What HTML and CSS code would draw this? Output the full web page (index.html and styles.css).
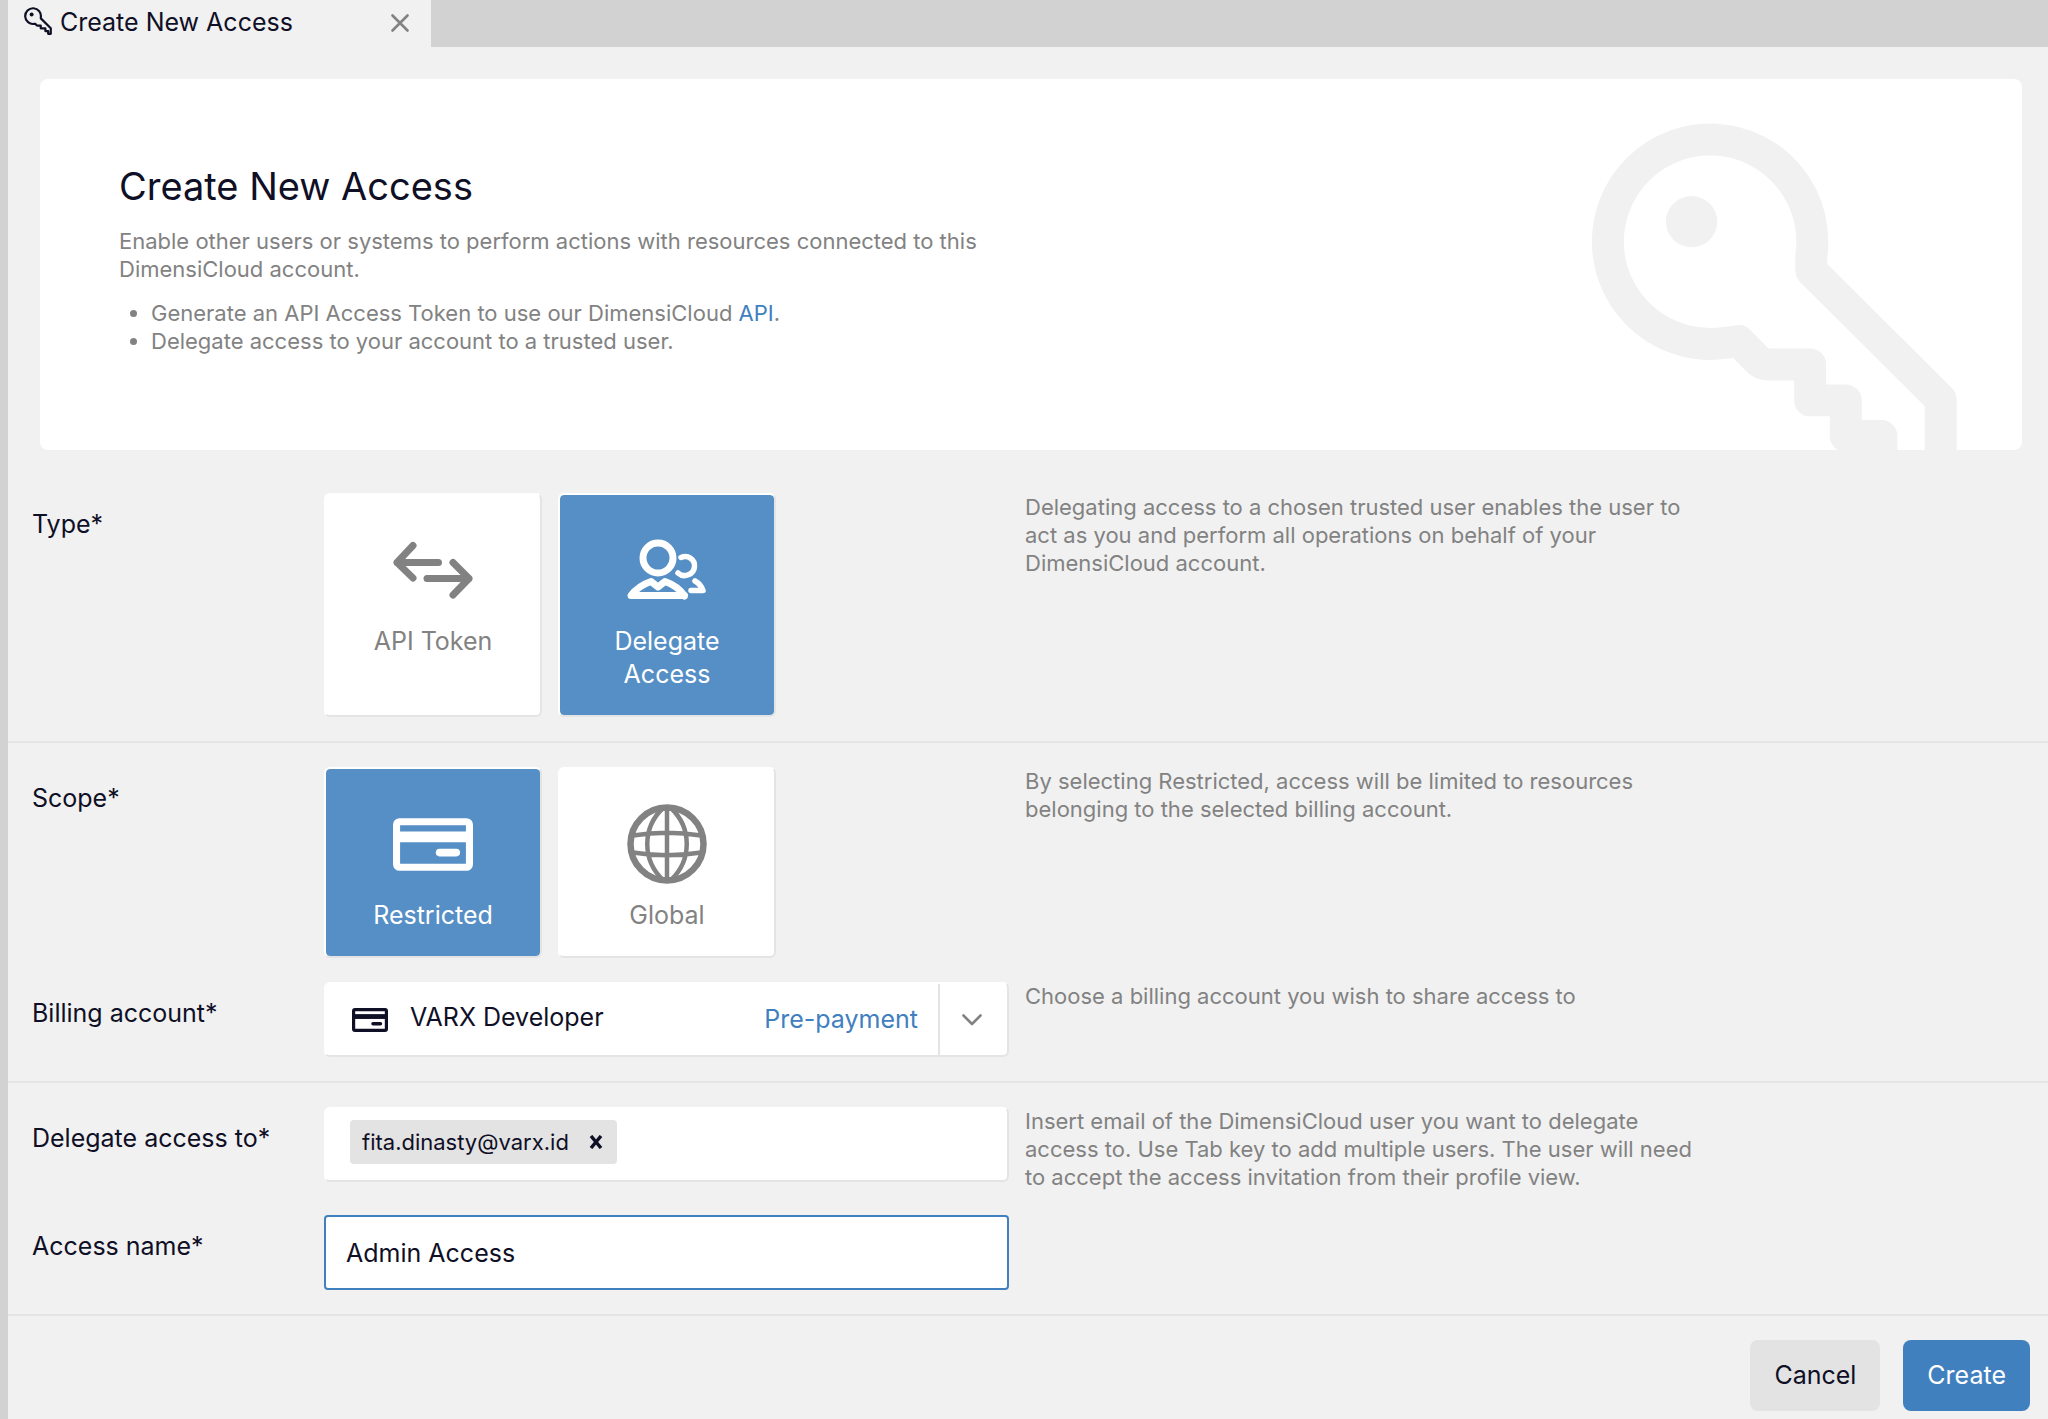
FILE: index.html
```html
<!DOCTYPE html>
<html lang="en">
<head>
<meta charset="utf-8">
<meta name="viewport" content="width=device-width, initial-scale=1">
<title>Create New Access</title>
<link rel="stylesheet" href="styles.css">
</head>
<body>
<svg class="defs" aria-hidden="true">
  <symbol id="card" viewBox="0 0 79 52">
    <rect x="3.5" y="3.5" width="72" height="45" rx="3" fill="none" stroke="currentColor" stroke-width="7"/>
    <path d="M5 18.500H74" stroke="currentColor" stroke-width="10.500"/>
    <path d="M46 34H62.500" stroke="currentColor" stroke-width="7.500" stroke-linecap="round"/>
  </symbol>
</svg>

<div class="app">
  <header class="tabs">
    <div class="tab">
      <svg class="tab-icon" viewBox="96 188 1094 1094" aria-hidden="true">
        <path d="M622 913Q604 913 590 898L536 843L495 848A307 307 0 1 1 753 592L754 632L1142 1018V1236H1040V1128H930V1021H750V913Z" fill="none" stroke="currentColor" stroke-width="86" stroke-linejoin="round"/>
        <circle cx="394" cy="484" r="77" fill="currentColor"/>
      </svg>
      <span class="tab-title">Create New Access</span>
      <button class="tab-close" type="button" aria-label="Close tab">
        <svg viewBox="0 0 18 18" aria-hidden="true"><path d="M1.500 1.500L16.500 16.500M16.500 1.500L1.500 16.500" fill="none" stroke="currentColor" stroke-width="2.600" stroke-linecap="round"/></svg>
      </button>
    </div>
  </header>

  <main>
    <section class="hero">
      <div class="hero-text">
        <h1>Create New Access</h1>
        <p>Enable other users or systems to perform actions with resources connected to this DimensiCloud account.</p>
        <ul>
          <li>Generate an API Access Token to use our DimensiCloud <a href="#api">API</a>.</li>
          <li>Delegate access to your account to a trusted user.</li>
        </ul>
      </div>
      <svg class="hero-key" viewBox="96 188 1094 982" aria-hidden="true">
        <path d="M964 1300V1128H857V1021H750V913H622Q604 913 590 898L536 843L495 848A307 307 0 1 1 753 592L754 632L1142 1018V1300" fill="none" stroke="currentColor" stroke-width="96" stroke-linejoin="round"/>
        <path d="M857 1100V1128H964V1300H905Q857 1176 857 1128Z" fill="currentColor" stroke="none"/>
        <circle cx="394" cy="484" r="77" fill="currentColor"/>
      </svg>
    </section>

    <form>
      <div class="group">
        <div class="row" role="radiogroup" aria-labelledby="type-label">
          <span class="label" id="type-label">Type*</span>
          <div class="tiles">
            <label class="tile">
              <input type="radio" name="type" value="token">
              <svg class="tile-icon" viewBox="0 0 80 80" aria-hidden="true">
                <path d="M20 15.500L4 32.500L20 48M4 32.500H45.500M60 32.500L76 48.500L60 65M34 48.500H76" fill="none" stroke="currentColor" stroke-width="7" stroke-linecap="round" stroke-linejoin="round"/>
              </svg>
              <span>API Token</span>
            </label>
            <label class="tile">
              <input type="radio" name="type" value="delegate" checked>
              <svg class="tile-icon" viewBox="0 0 80 80" aria-hidden="true">
                <g fill="none" stroke="currentColor" stroke-linecap="round" stroke-linejoin="round">
                  <circle cx="31" cy="28" r="15" stroke-width="7"/>
                  <path d="M24 51.500L31 57L38 51.500Q51 56 57.500 66V65.500H4V65.500Q11 56 24 51.500Z" stroke-width="7"/>
                  <path d="M54 27.500C61 24.500 68 29.500 67.500 36.500C67 44.500 57 48.500 51 43M68 51Q74 54.500 76 60.500H64" stroke-width="5.500"/>
                </g>
              </svg>
              <span>Delegate Access</span>
            </label>
          </div>
          <p class="help">Delegating access to a chosen trusted user enables the user to act as you and perform all operations on behalf of your DimensiCloud account.</p>
        </div>
      </div>

      <div class="group">
        <div class="row" role="radiogroup" aria-labelledby="scope-label">
          <span class="label" id="scope-label">Scope*</span>
          <div class="tiles">
            <label class="tile">
              <input type="radio" name="scope" value="restricted" checked>
              <svg class="tile-icon" viewBox="0 0 80 80" aria-hidden="true"><use href="#card" x="0" y="14" width="80" height="53"/></svg>
              <span>Restricted</span>
            </label>
            <label class="tile">
              <input type="radio" name="scope" value="global">
              <svg class="tile-icon" viewBox="0 0 80 80" aria-hidden="true">
                <g fill="none" stroke="currentColor" stroke-width="4.500">
                  <circle cx="40" cy="40" r="36.500" stroke-width="6.500"/>
                  <path d="M40 4V76M36 4C15 24 15 56 36 76M44 4C65 24 65 56 44 76M6 31.500Q40 26 74 31.500M6 48.500Q40 54 74 48.500"/>
                </g>
              </svg>
              <span>Global</span>
            </label>
          </div>
          <p class="help">By selecting Restricted, access will be limited to resources belonging to the selected billing account.</p>
        </div>

        <div class="row">
          <label class="label" for="billing">Billing account*</label>
          <div class="field">
            <svg class="field-icon" viewBox="0 0 79 52" preserveAspectRatio="none" aria-hidden="true"><use href="#card" width="79" height="52"/></svg>
            <select id="billing"><option>VARX Developer</option></select>
            <span class="plan">Pre-payment</span>
            <span class="arrow">
              <svg viewBox="0 0 20 12" aria-hidden="true"><path d="M1.500 1.500L10 10L18.500 1.500" fill="none" stroke="currentColor" stroke-width="2.600" stroke-linecap="round" stroke-linejoin="round"/></svg>
            </span>
          </div>
          <p class="help">Choose a billing account you wish to share access to</p>
        </div>
      </div>

      <div class="group">
        <div class="row">
          <label class="label" for="emails">Delegate access to*</label>
          <div class="field chips">
            <span class="chip">fita.dinasty@varx.id
              <button type="button" aria-label="Remove fita.dinasty@varx.id">
                <svg viewBox="0 0 14 14" aria-hidden="true"><path d="M2 1L12 13M12 1L2 13" fill="none" stroke="currentColor" stroke-width="3.400"/></svg>
              </button>
            </span>
            <input class="emails" id="emails" type="text">
          </div>
          <p class="help">Insert email of the DimensiCloud user you want to delegate access to. Use Tab key to add multiple users. The user will need to accept the access invitation from their profile view.</p>
        </div>

        <div class="row">
          <label class="label" for="name">Access name*</label>
          <input class="field name" id="name" type="text" value="Admin Access">
        </div>
      </div>

      <div class="actions">
        <button class="btn" type="button">Cancel</button>
        <button class="btn primary" type="submit">Create</button>
      </div>
    </form>
  </main>
</div>
</body>
</html>
```
FILE: styles.css
```css
:root {
  --ink: #0f0f26;
  --muted: #828282;
  --blue: #4080bf;
  --line: #e4e4e4;
  --page: #f1f1f1;
}

* { box-sizing: border-box; }

body {
  margin: 0;
  background: var(--page);
  color: var(--ink);
  font: 25px/33px Inter, "Liberation Sans", sans-serif;
}

h1, p, ul { margin: 0; }

button, input, select { font: inherit; color: inherit; }

button { border: 0; padding: 0; background: none; cursor: pointer; }

svg { display: block; flex: none; }

.defs { width: 0; height: 0; position: absolute; }

.app {
  min-height: 100vh;
  border-left: 8px solid #d2d2d2;
}

/* Tab strip */
.tabs { display: flex; height: 47px; background: #d2d2d2; }

.tab {
  display: flex;
  align-items: center;
  width: 423px;
  padding: 0 22px 2px 16px;
  background: var(--page);
}

.tab-icon { width: 28px; height: 28px; margin-bottom: 4px; }
.tab-title { flex: 1; margin-left: 8px; }
.tab-close { color: var(--muted); }
.tab-close svg { width: 18px; height: 18px; }

/* Intro card */
.hero {
  display: flex;
  justify-content: space-between;
  margin: 32px 26px 19px 32px;
  padding: 44px 65px 0 79px;
  background: #fff;
  border-radius: 8px;
}

.hero-text {
  max-width: 880px;
  padding-top: 39px;
  color: var(--muted);
  font-size: 22px;
  line-height: 28px;
}

h1 {
  margin-bottom: 17px;
  color: var(--ink);
  font-size: 38px;
  font-weight: 400;
  line-height: 48px;
}

ul { margin-top: 16px; padding-left: 32px; }
a { color: var(--blue); text-decoration: none; }
.hero-key { width: 365px; height: 327px; color: var(--page); }

/* Form rows */
.group {
  display: grid;
  gap: 24px;
  padding: 24px;
  border-bottom: 2px solid var(--line);
}

.row {
  display: grid;
  grid-template-columns: 276px minmax(0, 685px) minmax(0, 676px);
  column-gap: 16px;
  align-items: start;
}

.label { padding-top: 15px; }
.help { color: var(--muted); font-size: 22px; line-height: 28px; }

.tiles { display: flex; gap: 16px; }

.tile, .field {
  background: #fff;
  border: 2px solid #fff;
  border-right-color: var(--line);
  border-bottom-color: var(--line);
  border-radius: 6px;
}

.tile {
  display: flex;
  flex-direction: column;
  align-items: center;
  width: 218px;
  padding: 35px 36px 24px;
  color: var(--muted);
  text-align: center;
  cursor: pointer;
}

.tile input { appearance: none; width: 0; height: 0; margin: 0; }
.tile-icon { width: 80px; height: 80px; margin-bottom: 15px; }

.tile:has(:checked) { background: #568fc6; background-clip: padding-box; color: #fff; }

.field { display: flex; align-items: center; width: 100%; height: 75px; }
.field-icon { width: 36px; height: 24px; margin: 0 22px 0 26px; }

select {
  flex: 1;
  min-width: 0;
  height: 100%;
  padding: 0 0 4px;
  border: 0;
  background: none;
  appearance: none;
}

.plan { color: var(--blue); }

.arrow {
  display: grid;
  place-items: center;
  width: 69px;
  height: 100%;
  margin-left: 20px;
  padding-right: 4px;
  border-left: 2px solid var(--line);
  color: var(--muted);
}

.arrow svg { width: 20px; height: 12px; }

.chips { padding-bottom: 5px; }

.chip {
  display: flex;
  align-items: center;
  gap: 20px;
  height: 44px;
  margin-left: 24px;
  padding: 0 14px 0 12px;
  border-radius: 4px;
  background: #e3e3e3;
  font-size: 22px;
}

.chip svg { width: 14px; height: 14px; }

.emails { flex: 1; min-width: 0; height: 100%; border: 0; background: none; outline: 0; }

.name { padding: 0 20px; border-color: var(--blue); border-radius: 4px; outline: 0; }

/* Footer buttons */
.actions { display: flex; justify-content: flex-end; gap: 23px; padding: 24px 18px 7px; }

.btn { height: 71px; padding: 0 24px; border-radius: 8px; background: #e3e3e3; }
.primary { background: var(--blue); color: #fff; }
```
